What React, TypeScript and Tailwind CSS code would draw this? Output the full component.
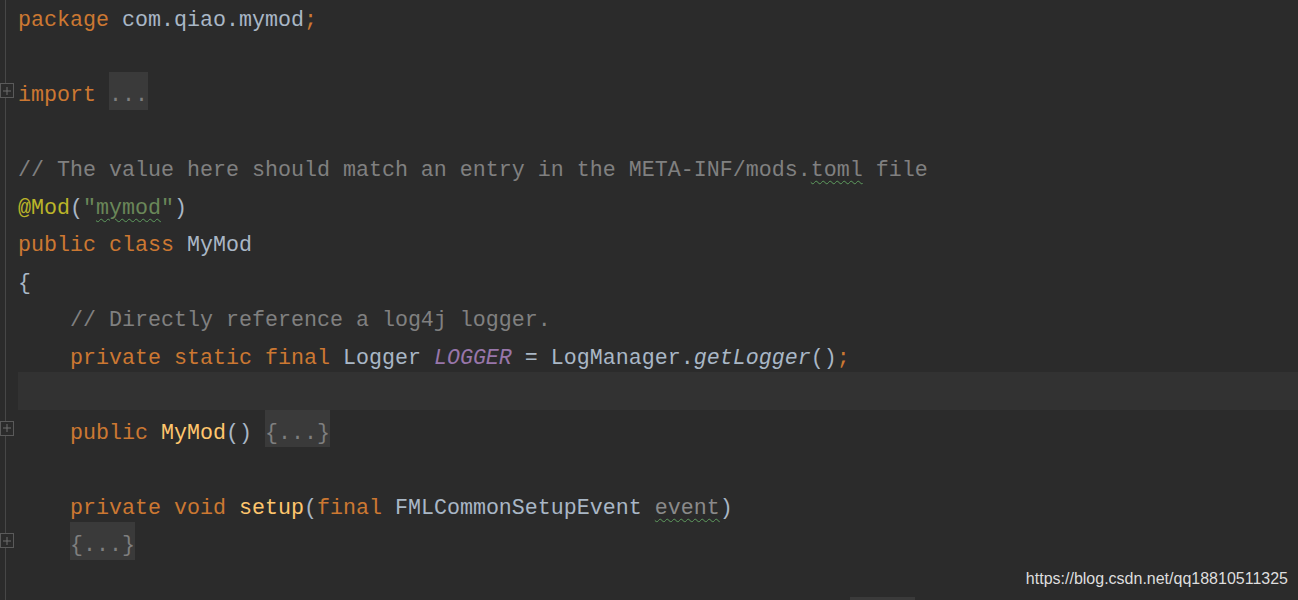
import React from 'react'

type Tok = { t: string; c?: string }

const KW = 'text-[#cc7832]'
const CMT = 'text-[#808080]'
const ANN = 'text-[#bbb529]'
const STR = 'text-[#6a8759]'
const DECL = 'text-[#ffc66d]'
const FIELD = 'text-[#9876aa] italic'
const CALL = 'italic'
const UNUSED = 'text-[#8a8a8a]'
const WAVE = 'underline decoration-wavy decoration-[#5e9c5e] decoration-1 underline-offset-[4px]'

// one entry per editor row
type Row = {
  toks: Tok[]
  fold?: string // placeholder text shown in a grey box
  marker?: boolean
  current?: boolean
}

const ROWS: Row[] = [
  { toks: [{ t: 'package', c: KW }, { t: ' com.qiao.mymod' }, { t: ';', c: KW }] },
  { toks: [] },
  { toks: [{ t: 'import', c: KW }, { t: ' ' }], fold: '...', marker: true },
  { toks: [] },
  {
    toks: [
      { t: '// The value here should match an entry in the META-INF/mods.', c: CMT },
      { t: 'toml', c: CMT + ' ' + WAVE },
      { t: ' file', c: CMT },
    ],
  },
  {
    toks: [
      { t: '@Mod', c: ANN },
      { t: '(' },
      { t: '"', c: STR },
      { t: 'mymod', c: STR + ' ' + WAVE },
      { t: '"', c: STR },
      { t: ')' },
    ],
  },
  { toks: [{ t: 'public class ', c: KW }, { t: 'MyMod' }] },
  { toks: [{ t: '{' }] },
  { toks: [{ t: '    ' }, { t: '// Directly reference a log4j logger.', c: CMT }] },
  {
    toks: [
      { t: '    ' },
      { t: 'private static final ', c: KW },
      { t: 'Logger ' },
      { t: 'LOGGER', c: FIELD },
      { t: ' = LogManager.' },
      { t: 'getLogger', c: CALL },
      { t: '()' },
      { t: ';', c: KW },
    ],
  },
  { toks: [], current: true },
  {
    toks: [{ t: '    ' }, { t: 'public ', c: KW }, { t: 'MyMod', c: DECL }, { t: '() ' }],
    fold: '{...}',
    marker: true,
  },
  { toks: [] },
  {
    toks: [
      { t: '    ' },
      { t: 'private void ', c: KW },
      { t: 'setup', c: DECL },
      { t: '(' },
      { t: 'final ', c: KW },
      { t: 'FMLCommonSetupEvent ' },
      { t: 'event', c: UNUSED + ' ' + WAVE },
      { t: ')' },
    ],
  },
  { toks: [{ t: '    ' }], fold: '{...}', marker: true },
  { toks: [] },
  // next fold box only peeks in at the bottom edge
  { toks: [{ t: ' '.repeat(64) }], fold: '' },
]

const FoldMarker = () => (
  <div className="w-[14px] h-[15px] border border-[#5a5a5a] bg-[#2b2b2b] flex items-center justify-center">
    <svg width="10" height="10" viewBox="0 0 10 10">
      <path d="M1 5h8M5 1v8" stroke="#6e6e6e" strokeWidth="1" />
    </svg>
  </div>
)

const CodeRow = ({ row }: { row: Row }) => (
  <div className="flex h-[37.5px]">
    <div className="w-[18px] shrink-0 flex items-center bg-[linear-gradient(to_right,transparent_5px,#474747_5px,#474747_6px,transparent_6px)]">
      {row.marker && <FoldMarker />}
    </div>
    <div className={`flex-1 whitespace-pre leading-[47.5px] ${row.current ? 'bg-[#323232]' : ''}`}>
      {row.toks.map((tk, i) => (
        <span key={i} className={tk.c}>
          {tk.t}
        </span>
      ))}
      {row.fold !== undefined && (
        <span
          className={`inline-block align-top h-[37.5px] leading-[47.5px] bg-[#3a3a3a] text-[#7f7f7f] ${
            row.fold === '' ? 'w-[65px]' : ''
          }`}
        >
          {row.fold}
        </span>
      )}
    </div>
  </div>
)

export default function App() {
  return (
    <div className="relative w-[1298px] h-[600px] overflow-hidden bg-[#2b2b2b]">
      <div
        className="-mt-[3px] text-[21.67px] text-[#a9b7c6]"
        style={{ fontFamily: '"Liberation Mono", "DejaVu Sans Mono", monospace' }}
      >
        {ROWS.map((r, i) => (
          <CodeRow key={i} row={r} />
        ))}
      </div>
      <div
        className="absolute right-[10px] top-[571px] text-[16px] leading-none text-[#dedede]"
        style={{ fontFamily: '"Liberation Sans", Arial, sans-serif' }}
      >
        https://blog.csdn.net/qq18810511325
      </div>
    </div>
  )
}
